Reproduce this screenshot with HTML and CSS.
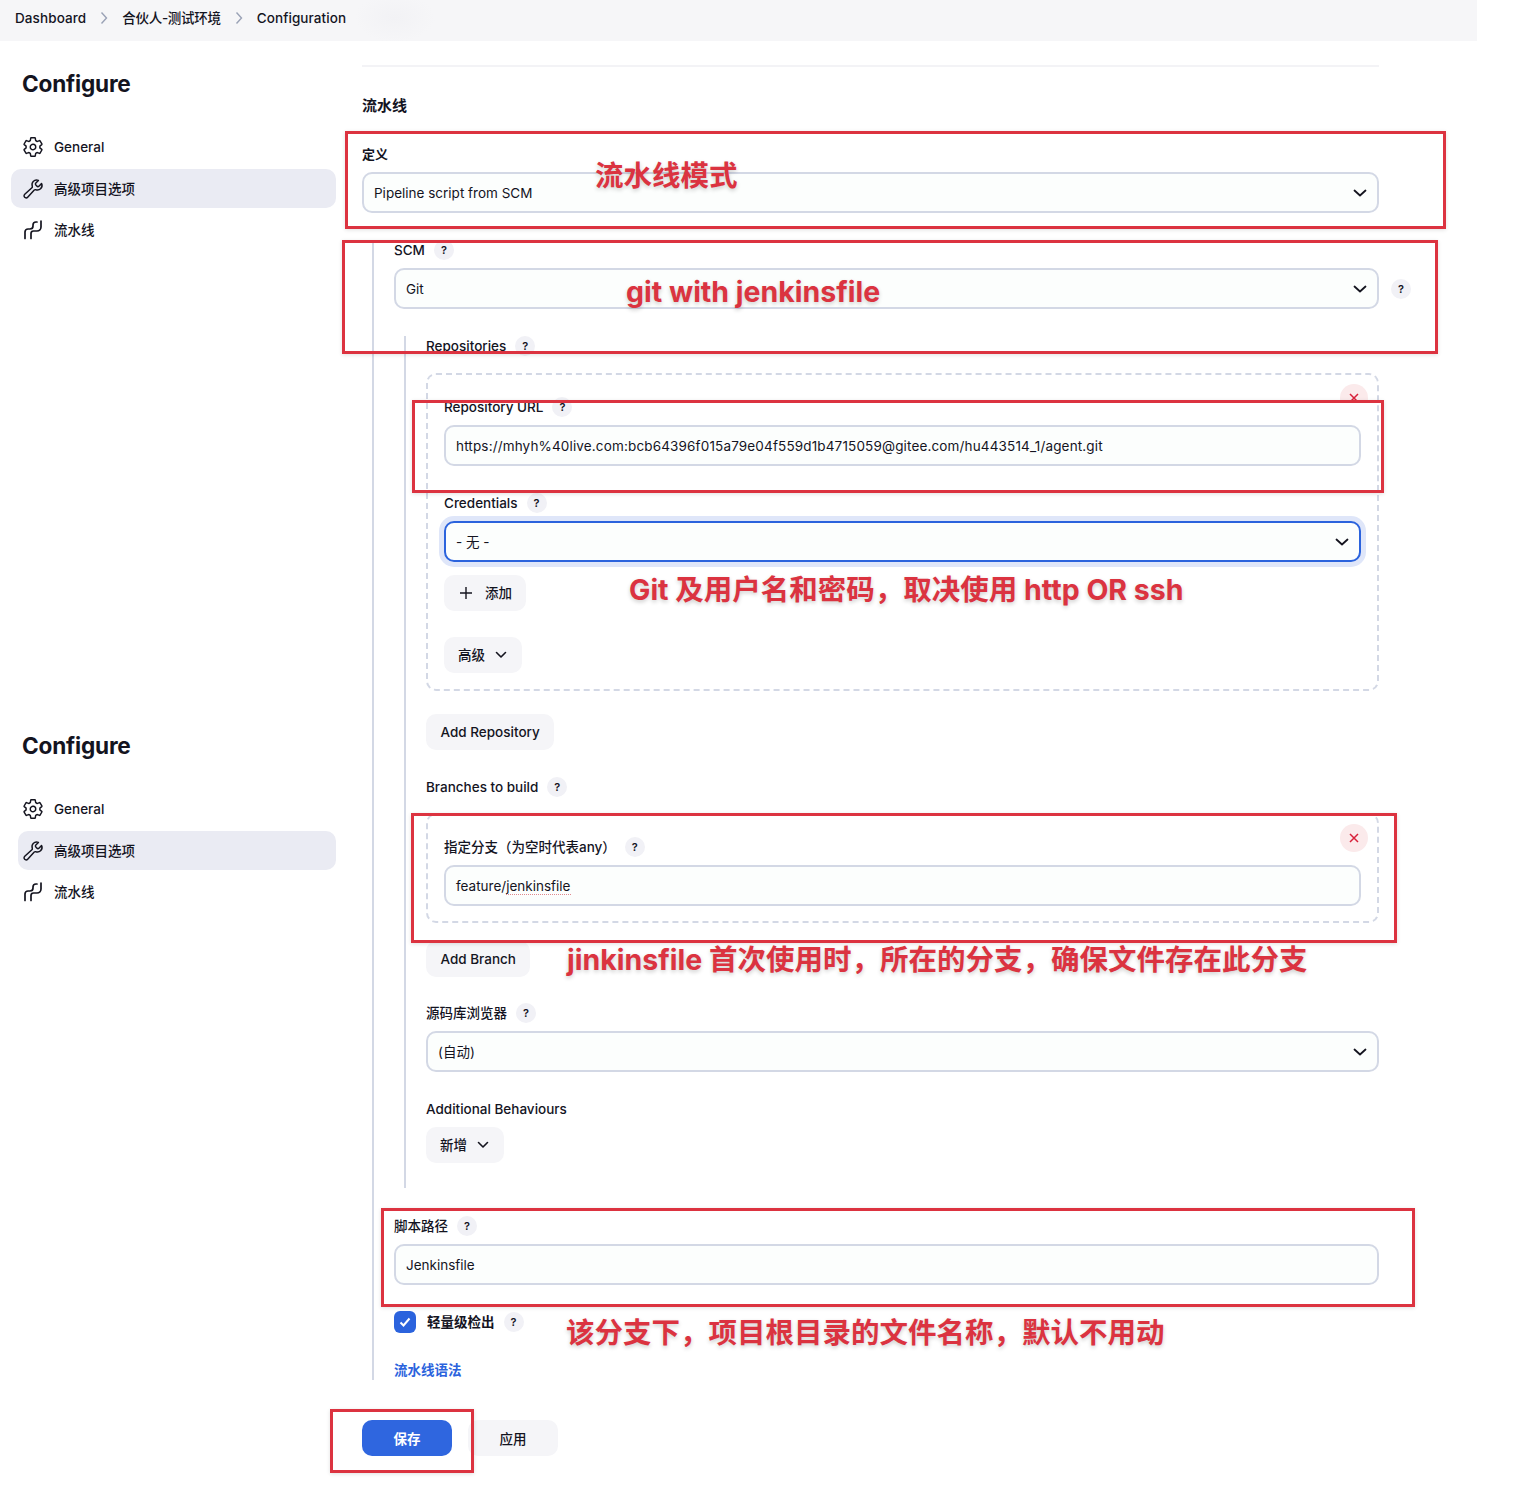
FILE: index.html
```html
<!DOCTYPE html>
<html lang="zh-CN">
<head>
    <meta charset="UTF-8">
    <meta name="viewport" content="width=device-width, initial-scale=1.0">
    <title>Configuration</title>
    <link rel="stylesheet" href="styles.css">
</head>
<body>
<div class="page">
    <div class="breadcrumb">
        <span>Dashboard</span>
        <svg class="crumb-arrow" viewBox="0 0 8 14"><path d="M1.5 1.5 6.5 7l-5 5.500"/></svg>
        <span class="up crumb-cjk">合伙人-测试环境</span>
        <svg class="crumb-arrow" viewBox="0 0 8 14"><path d="M1.5 1.5 6.5 7l-5 5.500"/></svg>
        <span>Configuration</span>
    </div>

    <div class="layout">
        <div class="sidebar">
            <div class="side-group">
                <h1>Configure</h1>
                <div class="side-item">
                    <svg class="side-icon" viewBox="0 0 512 512"><path class="thick" d="M262.29 192.31a64 64 0 1057.4 57.4 64.13 64.13 0 00-57.4-57.4zM416.39 256a154.34 154.34 0 01-1.53 20.79l45.21 35.46a10.81 10.81 0 012.45 13.75l-42.77 74a10.81 10.81 0 01-13.14 4.59l-44.9-18.08a16.11 16.11 0 00-15.17 1.75A164.48 164.48 0 01325 400.8a15.94 15.94 0 00-8.82 12.14l-6.73 47.89a11.08 11.08 0 01-10.68 9.17h-85.54a11.11 11.11 0 01-10.69-8.87l-6.72-47.82a16.07 16.07 0 00-9-12.22 155.3 155.3 0 01-21.46-12.57 16 16 0 00-15.11-1.71l-44.89 18.07a10.81 10.81 0 01-13.14-4.58l-42.77-74a10.8 10.8 0 012.45-13.75l38.21-30a16.05 16.05 0 006-14.08c-.36-4.17-.58-8.33-.58-12.5s.21-8.27.58-12.35a16 16 0 00-6.07-13.94l-38.19-30A10.81 10.81 0 0149.48 186l42.77-74a10.81 10.81 0 0113.14-4.59l44.9 18.08a16.11 16.11 0 0015.17-1.75A164.48 164.48 0 01187 111.2a15.94 15.94 0 008.82-12.14l6.73-47.89A11.08 11.08 0 01213.23 42h85.54a11.11 11.11 0 0110.69 8.87l6.72 47.82a16.07 16.07 0 009 12.22 155.3 155.3 0 0121.46 12.57 16 16 0 0015.11 1.71l44.89-18.07a10.81 10.81 0 0113.14 4.58l42.77 74a10.8 10.8 0 01-2.45 13.75l-38.21 30a16.05 16.05 0 00-6.05 14.08c.33 4.14.55 8.3.55 12.47z"/></svg>
                    <span>General</span>
                </div>
                <div class="side-item active wide">
                    <svg class="side-icon" viewBox="0 0 512 512"><path class="thick" d="M393.87 190a32.1 32.1 0 01-45.25 0l-26.57-26.57a32.09 32.09 0 010-45.26L382.19 58a1 1 0 00-.3-1.64c-38.82-16.64-89.15-8.16-121.11 23.57-30.58 30.35-32.32 76-21.12 115.84a31.93 31.93 0 01-9.06 32.08L64 380a48.17 48.17 0 1068 68l153.86-167a31.93 31.93 0 0131.6-9.13c39.54 10.59 84.54 8.6 114.72-21.19 32.49-32 39.5-88.56 23.75-120.93a1 1 0 00-1.6-.26z"/></svg>
                    <span class="up">高级项目选项</span>
                </div>
                <div class="side-item">
                    <svg class="side-icon" viewBox="0 0 22 22"><path d="M15 3h-1a3 3 0 0 0-3 3v1a3 3 0 0 1-3 3H6a3 3 0 0 0-3 3v6.500"/><path d="M19 2v6a4 4 0 0 1-4 4h-3.500A2.500 2.500 0 0 0 9 14.500v5"/></svg>
                    <span class="up">流水线</span>
                </div>
            </div>
            <div class="side-group second">
                <h1>Configure</h1>
                <div class="side-item">
                    <svg class="side-icon" viewBox="0 0 512 512"><path class="thick" d="M262.29 192.31a64 64 0 1057.4 57.4 64.13 64.13 0 00-57.4-57.4zM416.39 256a154.34 154.34 0 01-1.53 20.79l45.21 35.46a10.81 10.81 0 012.45 13.75l-42.77 74a10.81 10.81 0 01-13.14 4.59l-44.9-18.08a16.11 16.11 0 00-15.17 1.75A164.48 164.48 0 01325 400.8a15.94 15.94 0 00-8.82 12.14l-6.73 47.89a11.08 11.08 0 01-10.68 9.17h-85.54a11.11 11.11 0 01-10.69-8.87l-6.72-47.82a16.07 16.07 0 00-9-12.22 155.3 155.3 0 01-21.46-12.57 16 16 0 00-15.11-1.71l-44.89 18.07a10.81 10.81 0 01-13.14-4.58l-42.77-74a10.8 10.8 0 012.45-13.75l38.21-30a16.05 16.05 0 006-14.08c-.36-4.17-.58-8.33-.58-12.5s.21-8.27.58-12.35a16 16 0 00-6.07-13.94l-38.19-30A10.81 10.81 0 0149.48 186l42.77-74a10.81 10.81 0 0113.14-4.59l44.9 18.08a16.11 16.11 0 0015.17-1.75A164.48 164.48 0 01187 111.2a15.94 15.94 0 008.82-12.14l6.73-47.89A11.08 11.08 0 01213.23 42h85.54a11.11 11.11 0 0110.69 8.87l6.72 47.82a16.07 16.07 0 009 12.22 155.3 155.3 0 0121.46 12.57 16 16 0 0015.11 1.71l44.89-18.07a10.81 10.81 0 0113.14 4.58l42.77 74a10.8 10.8 0 01-2.45 13.75l-38.21 30a16.05 16.05 0 00-6.05 14.08c.33 4.14.55 8.3.55 12.47z"/></svg>
                    <span>General</span>
                </div>
                <div class="side-item active">
                    <svg class="side-icon" viewBox="0 0 512 512"><path class="thick" d="M393.87 190a32.1 32.1 0 01-45.25 0l-26.57-26.57a32.09 32.09 0 010-45.26L382.19 58a1 1 0 00-.3-1.64c-38.82-16.64-89.15-8.16-121.11 23.57-30.58 30.35-32.32 76-21.12 115.84a31.93 31.93 0 01-9.06 32.08L64 380a48.17 48.17 0 1068 68l153.86-167a31.93 31.93 0 0131.6-9.13c39.54 10.59 84.54 8.6 114.72-21.19 32.49-32 39.5-88.56 23.75-120.93a1 1 0 00-1.6-.26z"/></svg>
                    <span class="up">高级项目选项</span>
                </div>
                <div class="side-item">
                    <svg class="side-icon" viewBox="0 0 22 22"><path d="M15 3h-1a3 3 0 0 0-3 3v1a3 3 0 0 1-3 3H6a3 3 0 0 0-3 3v6.500"/><path d="M19 2v6a4 4 0 0 1-4 4h-3.500A2.500 2.500 0 0 0 9 14.500v5"/></svg>
                    <span class="up">流水线</span>
                </div>
            </div>
        </div>

        <div class="content">
            <div class="rule"></div>
            <div class="section-title">流水线</div>

            <div class="label bold top-28"><span class="up">定义</span></div>
            <div class="box select">
                <span>Pipeline script from SCM</span>
                <svg class="chevron" viewBox="0 0 14 8"><path d="M1.500 1.500 7 6.500l5.500-5"/></svg>
            </div>

            <div class="nested outer">
                <div class="label">SCM <span class="help">?</span></div>
                <div class="with-help">
                    <div class="box select">
                        <span>Git</span>
                        <svg class="chevron" viewBox="0 0 14 8"><path d="M1.500 1.500 7 6.500l5.500-5"/></svg>
                    </div>
                    <span class="help side-help">?</span>
                </div>

                <div class="nested inner">
                    <div class="label">Repositories <span class="help">?</span></div>

                    <div class="repeat repo">
                        <div class="delete clipped">
                            <svg viewBox="0 0 10 10"><path d="M1 1l8 8M9 1l-8 8"/></svg>
                        </div>
                        <div class="label">Repository URL <span class="help">?</span></div>
                        <div class="box"><span class="url-text">https://mhyh%40live.com:bcb64396f015a79e04f559d1b4715059@gitee.com/hu443514_1/agent.git</span></div>
                        <div class="label top-27">Credentials <span class="help">?</span></div>
                        <div class="box select focused">
                            <span class="up">- 无 -</span>
                            <svg class="chevron" viewBox="0 0 14 8"><path d="M1.500 1.500 7 6.500l5.500-5"/></svg>
                        </div>
                        <div class="btn add-btn top-13">
                            <svg class="plus" viewBox="0 0 14 14"><path d="M7 1v12M1 7h12"/></svg>
                            <span class="up">添加</span>
                        </div>
                        <div class="btn drop-btn top-26">
                            <span class="up">高级</span>
                            <svg class="small-chevron" viewBox="0 0 12 8"><path d="M1.500 1.500 6 6l4.500-4.500"/></svg>
                        </div>
                    </div>

                    <div class="btn top-23">Add Repository</div>

                    <div class="label top-27">Branches to build <span class="help">?</span></div>
                    <div class="repeat branch">
                        <div class="delete">
                            <svg viewBox="0 0 10 10"><path d="M1 1l8 8M9 1l-8 8"/></svg>
                        </div>
                        <div class="label"><span class="up">指定分支（为空时代表any）</span> <span class="help">?</span></div>
                        <div class="box"><span>feature/<span class="spell">jenkinsfile</span></span></div>
                    </div>
                    <div class="btn top-18">Add Branch</div>

                    <div class="label top-26"><span class="up">源码库浏览器</span> <span class="help">?</span></div>
                    <div class="box select">
                        <span class="up">(自动)</span>
                        <svg class="chevron" viewBox="0 0 14 8"><path d="M1.500 1.500 7 6.500l5.500-5"/></svg>
                    </div>

                    <div class="label top-27">Additional Behaviours</div>
                    <div class="btn drop-btn">
                        <span class="up">新增</span>
                        <svg class="small-chevron" viewBox="0 0 12 8"><path d="M1.500 1.500 6 6l4.500-4.500"/></svg>
                    </div>
                </div>

                <div class="label top-28"><span class="up">脚本路径</span> <span class="help">?</span></div>
                <div class="box"><span>Jenkinsfile</span></div>

                <div class="check-row">
                    <div class="checkbox">
                        <svg viewBox="0 0 12 10"><path d="M1.500 5.500 4.500 8.500 10.500 1.500"/></svg>
                    </div>
                    <span class="check-text up">轻量级检出</span>
                    <span class="help">?</span>
                </div>

                <div class="syntax">流水线语法</div>
            </div>

            <div class="actions">
                <div class="btn primary">保存</div>
                <div class="btn plain">应用</div>
            </div>
        </div>
    </div>

    <!-- red annotations drawn on top of the screenshot -->
    <div class="mark mark-def"></div>
    <div class="mark mark-scm"></div>
    <div class="mark mark-url"></div>
    <div class="mark mark-branch"></div>
    <div class="mark mark-path"></div>
    <div class="mark mark-save"></div>

    <div class="note note-def">流水线模式</div>
    <div class="note note-scm">git with jenkinsfile</div>
    <div class="note note-cred">Git 及用户名和密码，取决使用 http OR ssh</div>
    <div class="note note-branch">jinkinsfile 首次使用时，所在的分支，确保文件存在此分支</div>
    <div class="note note-path">该分支下，项目根目录的文件名称，默认不用动</div>
</div>
</body>
</html>
```

FILE: styles.css
```css
body {
    margin: 0;
    font-family: Inter, "Noto Sans CJK SC", sans-serif;
    font-size: 13.5px;
    color: #14141f;
    background: white;
}
svg {
    fill: none;
    stroke: currentColor;
    flex: none;
}
.page {
    position: relative;
    width: 1527px;
    height: 1496px;
    overflow: hidden;
}
/* CJK glyphs sit a pixel low next to Inter */
.up {
    padding-bottom: 2px;
}

/* top bar */
.breadcrumb {
    display: flex;
    align-items: center;
    gap: 14px;
    width: 1477px;
    height: 41px;
    box-sizing: border-box;
    padding: 0 0 5px 15px;
    background: radial-gradient(ellipse 40px 24px at 395px 18px, #f2f2f5, transparent), #f6f6f8;
    font-weight: 450;
    letter-spacing: 0.1px;
}
.crumb-cjk {
    letter-spacing: -0.3px;
}
.crumb-arrow {
    width: 8px;
    height: 14px;
    stroke: #9aa2b6;
    stroke-width: 1.4;
}

.layout {
    display: flex;
}

/* sidebar */
.sidebar {
    width: 362px;
    flex: none;
    box-sizing: border-box;
    padding: 28px 26px 0 18px;
}
.side-group h1 {
    margin: 0 0 28px 4px;
    font-size: 22.6px;
    line-height: 30px;
    font-weight: 650;
    letter-spacing: -0.2px;
}
.side-group.second {
    margin-top: 482px;
}
.side-item {
    display: flex;
    align-items: center;
    gap: 10px;
    height: 39px;
    margin-bottom: 2px;
    padding-left: 4px;
    border-radius: 10px;
    font-weight: 450;
}
h1 + .side-item {
    margin-bottom: 3px;
}
.side-item.active {
    background: #eaebf3;
}
.side-item.wide {
    margin-left: -7px;
    padding-left: 11px;
}
.side-icon {
    width: 22px;
    height: 22px;
    stroke-width: 1.7;
    stroke-linecap: round;
    stroke-linejoin: round;
}
.side-icon .thick {
    stroke-width: 34;
}

/* main column */
.content {
    width: 1017px;
    flex: none;
}
.rule {
    height: 2px;
    margin-top: 24px;
    background: #f3f3f6;
}
.section-title {
    margin-top: 29px;
    font-size: 15px;
    line-height: 20px;
    font-weight: 600;
}
.label {
    display: flex;
    align-items: center;
    gap: 9px;
    height: 20px;
    margin-bottom: 8px;
    font-weight: 450;
}
.label.bold {
    font-size: 13px;
    font-weight: 600;
}
.top-13 { margin-top: 13px; }
.top-18 { margin-top: 18px; }
.top-23 { margin-top: 23px; }
.top-26 { margin-top: 26px; }
.top-27 { margin-top: 27px; }
.top-28 { margin-top: 28px; }

.help {
    display: flex;
    align-items: center;
    justify-content: center;
    width: 20px;
    height: 20px;
    flex: none;
    border-radius: 50%;
    background: #f1f1f6;
    font-size: 11px;
    font-weight: 600;
}
.box {
    display: flex;
    align-items: center;
    justify-content: space-between;
    height: 41px;
    box-sizing: border-box;
    padding: 0 10px;
    border: 2px solid #d3d8e5;
    border-radius: 10px;
    background: #fcfefd;
    white-space: nowrap;
}
.box.focused {
    border-color: #2b63dd;
    box-shadow: 0 0 0 5px #dfe6f9;
}
.url-text {
    letter-spacing: 0.15px;
}
.chevron {
    width: 14px;
    height: 8px;
    stroke-width: 1.8;
    stroke-linecap: round;
    stroke-linejoin: round;
}
.spell {
    border-bottom: 1px dotted #e08a90;
}

.nested {
    border-left: 2px solid #d3d8e5;
}
.nested.outer {
    margin: 27px 0 0 10px;
    padding-left: 20px;
}
.nested.inner {
    margin: 27px 0 0 10px;
    padding: 0 0 25px 20px;
}
.with-help {
    display: flex;
    align-items: center;
    gap: 12px;
    margin-right: -32px;
}
.with-help .box {
    flex: 1;
}
.repeat {
    position: relative;
    padding: 22px 16px 16px;
    border: 2px dashed #d3d8e5;
    border-radius: 10px;
}
.repeat.repo {
    margin-top: 17px;
}
.repeat.branch {
    margin-top: 16px;
    padding-bottom: 15px;
}
.delete {
    position: absolute;
    top: 9px;
    right: 9px;
    display: flex;
    align-items: center;
    justify-content: center;
    width: 28px;
    height: 28px;
    border-radius: 50%;
    background: #fbeaeb;
    color: #d8203a;
}
.delete svg {
    width: 10px;
    height: 10px;
    stroke-width: 1.5;
}
.delete.clipped {
    clip-path: inset(0 0 10px 0);
}

.btn {
    display: flex;
    align-items: center;
    justify-content: center;
    width: fit-content;
    height: 36px;
    padding: 0 14.5px;
    border-radius: 10px;
    background: #f5f5f8;
    font-weight: 450;
}
.add-btn {
    gap: 12px;
    padding: 0 14px 0 15px;
}
.plus {
    width: 14px;
    height: 14px;
    stroke-width: 1.4;
}
.drop-btn {
    gap: 10px;
    padding: 0 15px 0 14px;
}
.small-chevron {
    width: 12px;
    height: 8px;
    stroke-width: 1.6;
    stroke-linecap: round;
    stroke-linejoin: round;
}

.check-row {
    display: flex;
    align-items: center;
    height: 22px;
    margin-top: 26px;
    font-weight: 600;
}
.checkbox {
    display: flex;
    align-items: center;
    justify-content: center;
    width: 22px;
    height: 22px;
    margin-right: 11px;
    border-radius: 6px;
    background: #2b63dd;
    color: white;
}
.checkbox svg {
    width: 12px;
    height: 10px;
    stroke-width: 2;
}
.check-text {
    margin-right: 9px;
}
.syntax {
    margin-top: 27px;
    line-height: 20px;
    color: #2b63dd;
    font-weight: 600;
}

.actions {
    display: flex;
    gap: 16px;
    margin-top: 40px;
}
.actions .btn {
    width: 90px;
    padding: 0;
}
.btn.primary {
    background: #2f66df;
    color: white;
    font-weight: 600;
}

/* annotations */
.mark {
    position: absolute;
    box-sizing: border-box;
    border: 3px solid #dc3340;
    box-shadow: 0 1px 4px rgba(0, 0, 0, 0.12);
}
.mark-def { left: 345px; top: 131px; width: 1101px; height: 98px; }
.mark-scm { left: 342px; top: 240px; width: 1096px; height: 114px; }
.mark-url { left: 412px; top: 400px; width: 972px; height: 93px; }
.mark-branch { left: 411px; top: 813px; width: 986px; height: 130px; }
.mark-path { left: 381px; top: 1208px; width: 1034px; height: 99px; }
.mark-save { left: 330px; top: 1409px; width: 144px; height: 64px; }

.note {
    position: absolute;
    color: #db3340;
    font-size: 28.500px;
    line-height: 36px;
    font-weight: 700;
    white-space: nowrap;
    text-shadow: 0 2px 4px rgba(0, 0, 0, 0.2);
}
.note-def { left: 595px; top: 158px; }
.note-scm { left: 626px; top: 274px; }
.note-cred { left: 629px; top: 572px; }
.note-branch { left: 567px; top: 942px; }
.note-path { left: 566px; top: 1315px; }
```
